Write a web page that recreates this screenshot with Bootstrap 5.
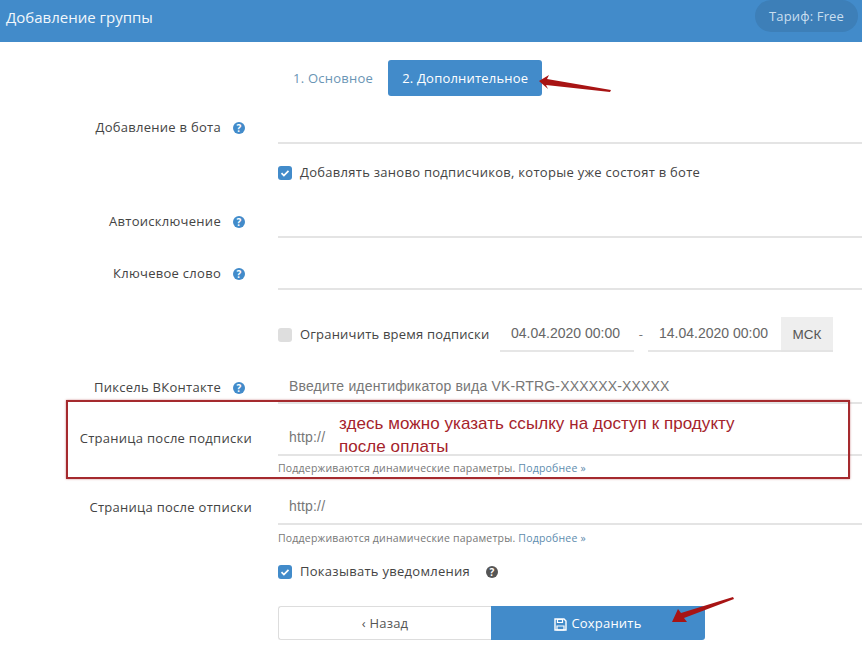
<!DOCTYPE html>
<html lang="ru">
<head>
<meta charset="utf-8">
<title>Добавление группы</title>
<link rel="stylesheet" href="https://cdn.jsdelivr.net/npm/bootstrap@5.3.0/dist/css/bootstrap.min.css">
<style>
html,body{width:862px;height:650px;overflow:hidden}
body{font-family:"Open Sans","Noto Sans",sans-serif;font-size:13px;color:#444;background:#fff;position:relative}
.hdr{height:42px;background:#428bca;color:#fff;padding:0 6px 8px}
.hdr-title{font-size:15px;color:#f2f7fb}
.plan{background:#3d7fb8;color:#c9deef;font-size:13px;border-radius:16px;height:32px;line-height:32px;padding:0 14px;margin-right:-2px;margin-top:-2px;letter-spacing:.15px}
.steps{padding-top:18px;padding-left:279px;height:70px}
.step{height:36px;line-height:36px;padding:0 14px;font-size:13px;color:#6a95b5;border-radius:3px;text-decoration:none;letter-spacing:.25px;white-space:nowrap}
.step-on{background:#428bca;color:#fff;font-weight:500;width:154px;margin-left:1px;letter-spacing:.2px}
.frow{display:flex;width:900px}
.flabel{width:278px;flex:none;padding-right:33px;text-align:right;display:flex;justify-content:flex-end;align-items:center;gap:12px;letter-spacing:.28px}
.flabel-plain{padding-right:26px}
.ffield{flex:1;border-bottom:2px solid #e4e4e4;height:100%;display:flex;align-items:center;padding-left:11px;padding-bottom:2px;font-family:"Liberation Sans",sans-serif;font-size:14px;color:#777;letter-spacing:.17px}
.qm{width:12px;height:12px;flex:none;display:block}
.chk{width:14px;height:14px;border-radius:3px;flex:none;display:block}
.chk-on{background:#428bca}
.chk-off{background:#dedede}
.crow{padding-left:278px;display:flex;align-items:center;gap:8px;letter-spacing:.28px;white-space:nowrap}
.dt{border-bottom:2px solid #e6e6e6;font-family:"Liberation Sans",sans-serif;font-size:14px;color:#666;height:35px;display:flex;align-items:center;padding-left:11px;letter-spacing:0;flex:none}
.limit{width:192px;flex:none;letter-spacing:.2px}
.dt1{width:134px}
.dt2{width:133px}
.sep{width:14px;flex:none;text-align:center;color:#777;margin:0 -8px}
.msk{width:52px;height:35px;background:#eee;color:#555;text-align:center;line-height:36px;font-family:"Liberation Sans",sans-serif;font-size:13.5px;border-bottom:2px solid #e4e4e4;margin-left:-8px;letter-spacing:0;flex:none}
.hint{padding-left:278px;font-size:10.5px;color:#777;letter-spacing:.2px;line-height:14px}
.hint a{color:#5e8cae;text-decoration:none}
.btns{padding-left:278px}
.bk,.sv{height:34px;font-size:13px;display:flex;align-items:center;justify-content:center;padding:2px 0 0;gap:4px;letter-spacing:.2px}
.bk{width:213px;border:1px solid #ddd;border-right:0;background:#fff;color:#555;border-radius:3px 0 0 3px}
.sv{width:214px;background:#428bca;border:0;color:#fff;border-radius:0 3px 3px 0}
.redbox{position:absolute;left:66px;top:400px;width:784px;height:79px;border:2px solid #a52a2e;box-shadow:0 0 2px rgba(165,42,46,.55);pointer-events:none}
.redtxt{position:absolute;left:339px;top:413px;font-family:"Liberation Sans",sans-serif;font-size:17px;line-height:22.5px;color:#a5232b;white-space:nowrap;letter-spacing:.06px}
.arrow{position:absolute;left:0;top:0;pointer-events:none}
.h-a{height:32px}.h-b{height:34px}
.mt-4px{margin-top:4px}.mt-20px{margin-top:20px}.mt-27px{margin-top:27px}.mt-18px{margin-top:18px}.mt-16px{margin-top:16px}
.mt-5px{margin-top:5px}.mt-6px{margin-top:6px}.mt-10px{margin-top:10px}.mt-17px{margin-top:17px}
.qm-gap{margin-left:8px}
.h-chk{height:58px}.h-time{height:35px}
</style>
</head>
<body>
<div class="hdr d-flex justify-content-between align-items-center">
  <span class="hdr-title">Добавление группы</span>
  <span class="plan">Тариф: Free</span>
</div>
<div class="steps d-flex align-items-start">
  <a class="step" href="#">1. Основное</a>
  <a class="step step-on" href="#">2. Дополнительное</a>
</div>
<div class="frow h-a">
  <div class="flabel">Добавление в бота <svg class="qm" viewBox="0 0 12 12"><circle cx="6" cy="6" r="6" fill="#428bca"/><text x="6" y="9.5" text-anchor="middle" font-size="10" font-weight="700" fill="#fff" font-family="Open Sans">?</text></svg></div>
  <div class="ffield"></div>
</div>
<div class="crow h-chk">
  <svg class="chk chk-on" viewBox="0 0 14 14"><path d="M3.5 7.2l2.4 2.4 4.6-4.8" fill="none" stroke="#fff" stroke-width="1.7"/></svg>
  <span>Добавлять заново подписчиков, которые уже состоят в боте</span>
</div>
<div class="frow h-a mt-4px">
  <div class="flabel">Автоисключение <svg class="qm" viewBox="0 0 12 12"><circle cx="6" cy="6" r="6" fill="#428bca"/><text x="6" y="9.5" text-anchor="middle" font-size="10" font-weight="700" fill="#fff" font-family="Open Sans">?</text></svg></div>
  <div class="ffield"></div>
</div>
<div class="frow h-a mt-20px">
  <div class="flabel">Ключевое слово <svg class="qm" viewBox="0 0 12 12"><circle cx="6" cy="6" r="6" fill="#428bca"/><text x="6" y="9.5" text-anchor="middle" font-size="10" font-weight="700" fill="#fff" font-family="Open Sans">?</text></svg></div>
  <div class="ffield"></div>
</div>
<div class="crow h-time mt-27px">
  <svg class="chk chk-off" viewBox="0 0 14 14"></svg>
  <span class="limit">Ограничить время подписки</span>
  <div class="dt dt1">04.04.2020 00:00</div>
  <div class="sep">-</div>
  <div class="dt dt2">14.04.2020 00:00</div>
  <div class="msk">МСК</div>
</div>
<div class="frow h-a mt-20px">
  <div class="flabel">Пиксель ВКонтакте <svg class="qm" viewBox="0 0 12 12"><circle cx="6" cy="6" r="6" fill="#428bca"/><text x="6" y="9.5" text-anchor="middle" font-size="10" font-weight="700" fill="#fff" font-family="Open Sans">?</text></svg></div>
  <div class="ffield">Введите идентификатор вида VK-RTRG-XXXXXX-XXXXX</div>
</div>
<div class="frow h-b mt-18px">
  <div class="flabel flabel-plain">Страница после подписки</div>
  <div class="ffield">http://</div>
</div>
<div class="hint mt-5px">Поддерживаются динамические параметры. <a href="#">Подробнее »</a></div>
<div class="frow h-b mt-16px">
  <div class="flabel flabel-plain">Страница после отписки</div>
  <div class="ffield">http://</div>
</div>
<div class="hint mt-6px">Поддерживаются динамические параметры. <a href="#">Подробнее »</a></div>
<div class="crow h-b mt-10px">
  <svg class="chk chk-on" viewBox="0 0 14 14"><path d="M3.5 7.2l2.4 2.4 4.6-4.8" fill="none" stroke="#fff" stroke-width="1.7"/></svg>
  <span>Показывать уведомления</span>
  <svg class="qm qm-gap" viewBox="0 0 12 12"><circle cx="6" cy="6" r="6" fill="#555"/><text x="6" y="9.5" text-anchor="middle" font-size="10" font-weight="700" fill="#fff" font-family="Open Sans">?</text></svg>
</div>
<div class="btns d-flex mt-17px">
  <button class="btn bk" type="button">‹ Назад</button>
  <button class="btn sv" type="button"><svg width="13" height="13" viewBox="0 0 13 13"><path d="M1 1h9l2 2v9H1z" fill="none" stroke="#fff" stroke-width="1.4"/><path d="M3.5 1.5h5v3h-5zM3 8h7v4H3z" fill="none" stroke="#fff" stroke-width="1.2"/></svg> Сохранить</button>
</div>

<div class="redbox"></div>
<div class="redtxt">здесь можно указать ссылку на доступ к продукту<br>после оплаты</div>
<svg class="arrow" width="862" height="650" viewBox="0 0 862 650">
  <path d="M539 81l10-6-2 4 64 11-1 2-64-7 2 4z" fill="#a81414"/>
  <path d="M672 622l6-13 3 4 52-16 1 2-50 19 3 4z" fill="#a81414"/>
</svg>
</body>
</html>
